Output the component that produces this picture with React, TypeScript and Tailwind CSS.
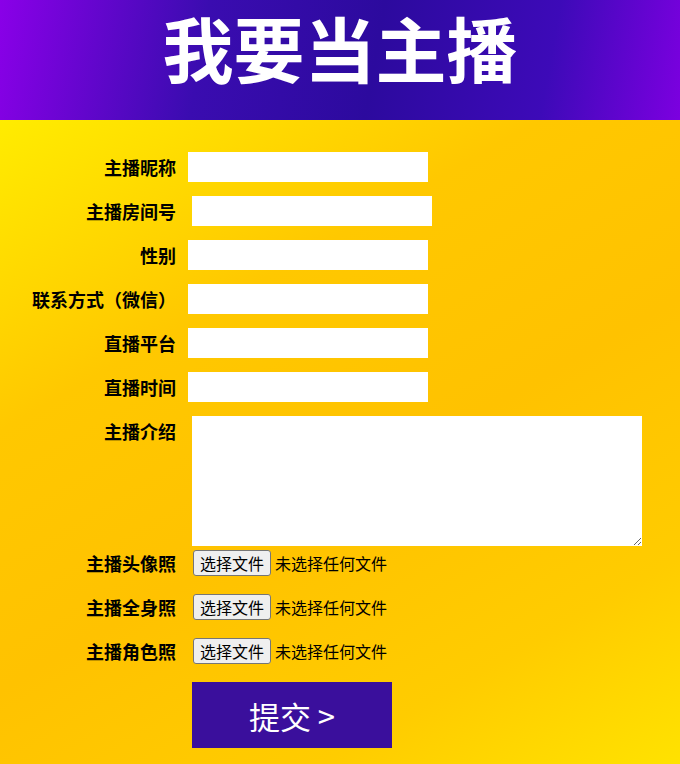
import React from "react";

const font = { fontFamily: '"Microsoft YaHei", "Noto Sans CJK SC", sans-serif' };

function Label({ text }: { text: string }) {
  return (
    <label className="w-[176px] shrink-0 text-right text-[18px] font-bold text-black leading-[30px] whitespace-nowrap">
      {text}
    </label>
  );
}

function TextRow({ label, shift }: { label: string; shift?: boolean }) {
  return (
    <div className="flex items-center h-[30px]">
      <Label text={label} />
      <input
        type="text"
        className={`${shift ? "ml-4" : "ml-3"} w-[240px] h-[30px] bg-white border-0 outline-none px-2 text-[16px]`}
      />
    </div>
  );
}

function FileRow({ label }: { label: string }) {
  return (
    <div className="flex items-center h-[26px]">
      <Label text={label} />
      <button
        type="button"
        className="ml-[17px] h-[26px] px-[6px] bg-[#efefef] border border-[#767676] rounded-[3px] text-[16px] leading-none text-black"
      >
        选择文件
      </button>
      <span className="ml-[4px] text-[16px] text-black">未选择任何文件</span>
    </div>
  );
}

export default function App() {
  return (
    <div style={font} className="w-[680px] min-h-[764px] flex flex-col">
      {/* header */}
      <div className="h-[120px] flex justify-center bg-[linear-gradient(100deg,#8a00e8_0%,#3a0cb0_30%,#2c0a9e_55%,#3d0ab8_80%,#7c00e0_100%)]">
        <h1 className="mt-[4px] text-[71px] leading-[84px] font-bold text-white">
          我要当主播
        </h1>
      </div>

      {/* form */}
      <div className="flex-1 pt-[32px] pb-[16px] bg-[linear-gradient(150deg,#ffec00_0%,#ffc800_30%,#ffc200_55%,#ffcc00_80%,#ffe200_100%)]">
        <div className="flex flex-col gap-[14px]">
          <TextRow label="主播昵称" />
          <TextRow label="主播房间号" shift />
          <TextRow label="性别" />
          <TextRow label="联系方式（微信）" />
          <TextRow label="直播平台" />
          <TextRow label="直播时间" />
          <div className="flex items-start">
            <Label text="主播介绍" />
            <textarea className="ml-4 w-[450px] h-[130px] bg-white border-0 outline-none p-1 block" />
          </div>
        </div>
        <div className="mt-[4px] flex flex-col gap-[18px]">
          <FileRow label="主播头像照" />
          <FileRow label="主播全身照" />
          <FileRow label="主播角色照" />
        </div>
        <div className="mt-[18px] pl-[192px]">
          <button
            type="button"
            className="w-[200px] h-[66px] bg-[#3a0f9c] text-white text-[31px] leading-none"
          >
            提交 &gt;
          </button>
        </div>
      </div>
    </div>
  );
}
